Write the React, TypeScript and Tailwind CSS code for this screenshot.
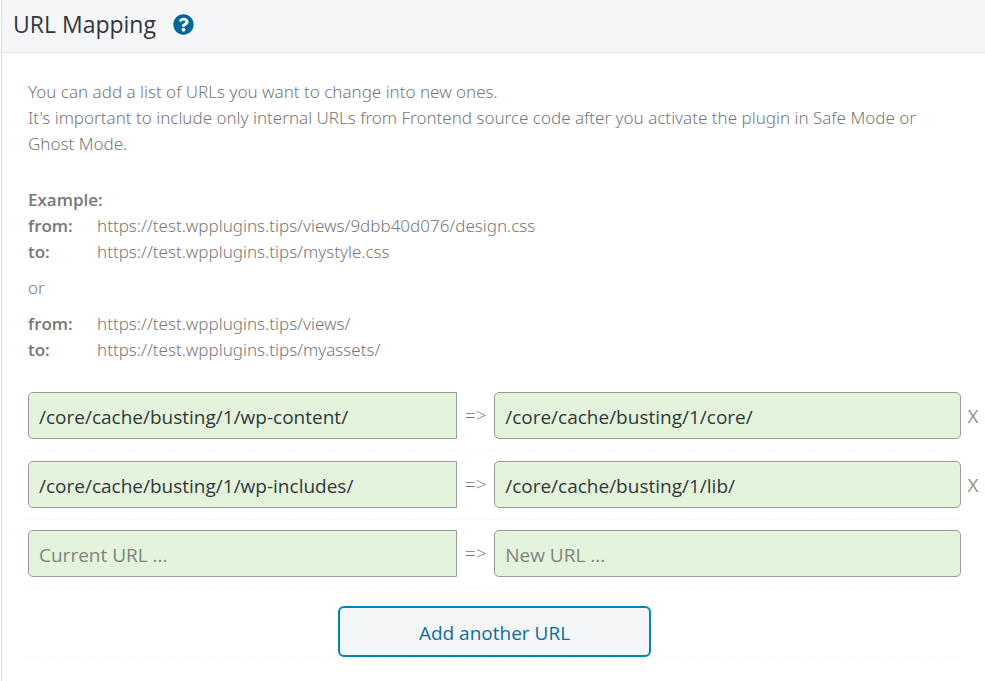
import { useState } from "react";
import { FaQuestionCircle } from "react-icons/fa";

type Mapping = { from: string; to: string };

const EXAMPLES = [
  {
    from: "https://test.wpplugins.tips/views/9dbb40d076/design.css",
    to: "https://test.wpplugins.tips/mystyle.css",
  },
  {
    from: "https://test.wpplugins.tips/views/",
    to: "https://test.wpplugins.tips/myassets/",
  },
];

const INITIAL: Mapping[] = [
  { from: "/core/cache/busting/1/wp-content/", to: "/core/cache/busting/1/core/" },
  { from: "/core/cache/busting/1/wp-includes/", to: "/core/cache/busting/1/lib/" },
  { from: "", to: "" },
];

function Example({ from, to }: Mapping) {
  return (
    <dl className="grid grid-cols-[69px_1fr]">
      <dt className="font-['Open_Sans',sans-serif] font-semibold">from:</dt>
      <dd>{from}</dd>
      <dt className="font-['Open_Sans',sans-serif] font-semibold">to:</dt>
      <dd>{to}</dd>
    </dl>
  );
}

export default function App() {
  const [mappings, setMappings] = useState(INITIAL);

  function update(index: number, field: keyof Mapping, value: string) {
    setMappings(mappings.map((m, i) => (i === index ? { ...m, [field]: value } : m)));
  }

  function remove(index: number) {
    setMappings(mappings.filter((_, i) => i !== index));
  }

  return (
    <div className="ml-px min-h-screen border-l border-[#dcdde0] bg-white font-['Open_Sans','Noto_Sans',sans-serif] text-[#777777]">
      <header className="flex items-center gap-[17px] border-b border-[#e0e2e5] bg-[#f5f6f8] px-[11px] pb-1">
        <h1 className="text-[23px] leading-12 text-[#32373c]">URL Mapping</h1>
        <a href="#help" aria-label="Help" className="text-[#006799]">
          <FaQuestionCircle className="size-[21px]" />
        </a>
      </header>

      <main className="pt-[26px] pl-[26px]">
        <div className="pr-10 font-['Noto_Sans',sans-serif] text-[17px] leading-[26px] font-light">
          <p>You can add a list of URLs you want to change into new ones.</p>
          <p>
            It's important to include only internal URLs from Frontend source
            code after you activate the plugin in Safe Mode or Ghost Mode.
          </p>

          <p className="mt-[30px] font-['Open_Sans',sans-serif] font-semibold">Example:</p>
          <Example {...EXAMPLES[0]} />
          <p className="my-[10px]">or</p>
          <Example {...EXAMPLES[1]} />
        </div>

        <ul className="mt-[19px]">
          {mappings.map((mapping, i) => (
            <li key={i} className="flex">
              <div className="flex flex-1 items-center border-b border-dashed border-[#f3f3f3] pt-[10px] pb-[11px]">
                <input
                  type="text"
                  aria-label="Current URL"
                  placeholder="Current URL ..."
                  value={mapping.from}
                  onChange={(e) => update(i, "from", e.target.value)}
                  className="h-[47px] w-[46%] rounded-l-[5px] border border-[#999c9c] bg-[#e4f3dc] px-[10px] pt-[3px] text-[19px] text-[#32373c] placeholder:text-[#7d8580]"
                />
                <span className="w-[37px] text-center text-[19px] font-light">=&gt;</span>
                <input
                  type="text"
                  aria-label="New URL"
                  placeholder="New URL ..."
                  value={mapping.to}
                  onChange={(e) => update(i, "to", e.target.value)}
                  className="h-[47px] min-w-0 flex-1 rounded-[5px] border border-[#999c9c] bg-[#e4f3dc] px-[10px] pt-[3px] text-[19px] text-[#32373c] placeholder:text-[#7d8580]"
                />
              </div>
              <div className="flex w-6 items-center justify-center">
                {mapping.from && (
                  <button
                    type="button"
                    aria-label="Remove mapping"
                    onClick={() => remove(i)}
                    className="text-[19px] font-medium text-[#909090]"
                  >
                    X
                  </button>
                )}
              </div>
            </li>
          ))}
        </ul>

        <div className="mr-6 border-b border-dashed border-[#f3f3f3] pt-[17px] text-center">
          <button
            type="button"
            onClick={() => setMappings([...mappings, { from: "", to: "" }])}
            className="h-[51px] w-1/3 min-w-[313px] rounded-[6px] border-2 border-[#0085ba] bg-[#f5f6f8] pt-[3px] text-[19px] text-[#0a6e9e]"
          >
            Add another URL
          </button>
        </div>
      </main>
    </div>
  );
}
